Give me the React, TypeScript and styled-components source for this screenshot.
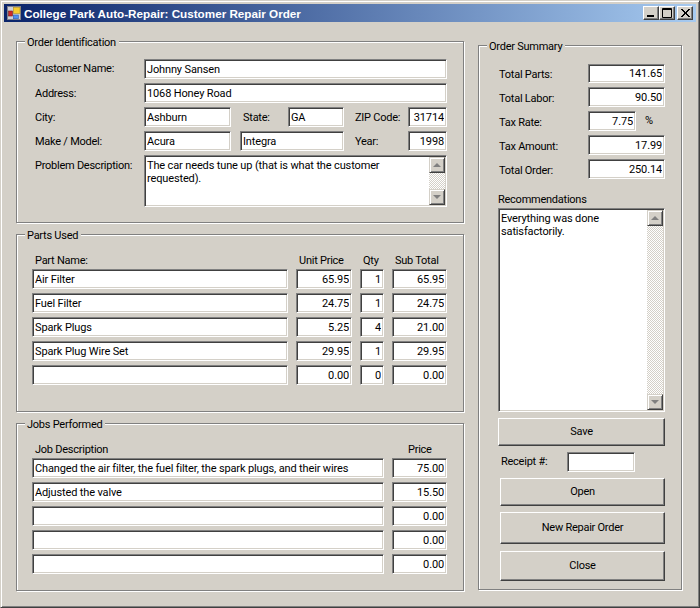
import React, { FC } from 'react';
import styled, { createGlobalStyle } from 'styled-components';

const FACE = '#d4d0c8';
const UI_FONT = '11px Roboto, "Liberation Sans", Arial, sans-serif';

const GlobalStyle = createGlobalStyle`
    html, body {
        margin: 0;
        padding: 0;
        background: ${FACE};
    }
    body {
        font: ${UI_FONT};
        letter-spacing: -0.25px;
        color: #000;
    }
`;

const Window = styled.div`
    box-sizing: border-box;
    width: 700px;
    height: 608px;
    padding: 3px;
    background: ${FACE};
    border: 1px solid;
    border-color: ${FACE} #404040 #404040 ${FACE};
    box-shadow: inset 1px 1px 0 #fff, inset -1px -1px 0 #808080;
    overflow: hidden;
`;

const TitleBar = styled.div`
    display: flex;
    align-items: center;
    height: 18px;
    padding: 0 3px 0 2px;
    background: linear-gradient(90deg, #0a246a, #a6caf0);
`;

const TitleText = styled.span`
    margin-left: 2px;
    margin-right: auto;
    color: #fff;
    font: bold 11.7px "Liberation Sans", Arial, sans-serif;
    letter-spacing: 0;
    white-space: nowrap;
`;

const CaptionButton = styled.button<{ $gap?: number }>`
    display: flex;
    align-items: center;
    justify-content: center;
    box-sizing: border-box;
    width: 16px;
    height: 14px;
    padding: 0;
    margin-left: ${props => props.$gap ?? 0}px;
    background: ${FACE};
    border: 1px solid;
    border-color: #fff #404040 #404040 #fff;
    box-shadow: inset -1px -1px 0 #808080;
`;

const Client = styled.div`
    display: flex;
    align-items: flex-start;
    gap: 14px;
    padding: 19px 0 0 12px;
`;

const LeftColumn = styled.div`
    display: flex;
    flex-direction: column;
    gap: 11px;
    width: 448px;
`;

const RightColumn = styled.div`
    margin-top: 4px;
    width: 204px;
`;

const Group = styled.section<{ $height: number }>`
    box-sizing: border-box;
    height: ${props => props.$height}px;
    border: 1px solid #808080;
    box-shadow: inset 1px 1px 0 #fff, 1px 1px 0 #fff;
`;

const Legend = styled.div`
    width: fit-content;
    height: 12px;
    line-height: 14px;
    margin: -6px 0 0 8px;
    padding: 0 3px 0 2px;
    background: ${FACE};
`;

const Rows = styled.div<{ $top: number; $left: number; $gap?: number }>`
    display: flex;
    flex-direction: column;
    gap: ${props => props.$gap ?? 4}px;
    margin: ${props => props.$top}px 0 0 ${props => props.$left}px;
`;

const FormRow = styled.div<{ $height?: number }>`
    display: flex;
    align-items: center;
    height: ${props => props.$height ?? 20}px;
`;

const TopRow = styled(FormRow)`
    align-items: flex-start;
`;

const Label = styled.label<{ $width: number; $gap?: number; $top?: number; $shift?: number }>`
    flex: none;
    width: ${props => props.$width}px;
    margin-left: ${props => props.$gap ?? 0}px;
    padding-top: ${props => props.$top ?? 0}px;
    margin-top: ${props => Math.max(0, (props.$shift ?? 0) * 2)}px;
    margin-bottom: ${props => Math.max(0, -(props.$shift ?? 0) * 2)}px;
    white-space: nowrap;
`;

const Field = styled.input<{ $width: number; $gap?: number; $right?: boolean }>`
    flex: none;
    box-sizing: border-box;
    width: ${props => props.$width}px;
    height: 100%;
    margin: 0 0 0 ${props => props.$gap ?? 0}px;
    padding: 0 2px;
    font: ${UI_FONT};
    letter-spacing: -0.14px;
    color: #000;
    text-align: ${props => (props.$right ? 'right' : 'left')};
    background: #fff;
    border: 1px solid;
    border-color: #808080 #fff #fff #808080;
    border-radius: 0;
    outline: none;
    box-shadow: inset 1px 1px 0 #404040, inset -1px -1px 0 ${FACE};
`;

const MemoBox = styled.div<{ $width: number; $height: number }>`
    display: flex;
    box-sizing: border-box;
    flex: none;
    width: ${props => props.$width}px;
    height: ${props => props.$height}px;
    padding: 1px;
    background: #fff;
    border: 1px solid;
    border-color: #808080 #fff #fff #808080;
    box-shadow: inset 1px 1px 0 #404040, inset -1px -1px 0 ${FACE};
`;

const MemoText = styled.div`
    flex: 1;
    padding: 2px 6px 0 1px;
    line-height: 13px;
    letter-spacing: -0.14px;
`;

const ScrollBar = styled.div`
    display: flex;
    flex: none;
    flex-direction: column;
    justify-content: space-between;
    width: 16px;
    background: repeating-conic-gradient(${FACE} 0 25%, #fff 0 50%) 0 0 / 2px 2px;
`;

const ScrollButton = styled.div`
    display: flex;
    align-items: center;
    justify-content: center;
    box-sizing: border-box;
    width: 16px;
    height: 16px;
    background: ${FACE};
    border: 1px solid;
    border-color: ${FACE} #404040 #404040 ${FACE};
    box-shadow: inset 1px 1px 0 #fff, inset -1px -1px 0 #808080;
`;

const Arrow = styled.div<{ $down?: boolean }>`
    width: 0;
    height: 0;
    border-left: 4px solid transparent;
    border-right: 4px solid transparent;
    ${props => (props.$down ? 'border-top: 4px solid #808080;' : 'border-bottom: 4px solid #808080;')}
`;

const PartGrid = styled.div`
    display: grid;
    grid-template-columns: 256px 56px 24px 55px;
    column-gap: 8px;
    row-gap: 4px;
    margin: 13px 0 0 15px;
    & > input {
        width: 100%;
        height: 20px;
    }
`;

const JobGrid = styled(PartGrid)`
    grid-template-columns: 352px 55px;
`;

const ColumnHead = styled.div<{ $indent?: number }>`
    height: 14px;
    line-height: 14px;
    padding-left: ${props => props.$indent ?? 3}px;
    margin-bottom: -3px;
    white-space: nowrap;
`;

const SummaryBlock = styled.div`
    margin: 12px 0 0 19px;
`;

const ButtonFace = styled.button<{ $height: number; $left: number; $top: number }>`
    display: block;
    box-sizing: border-box;
    width: ${props => 167 - props.$left}px;
    height: ${props => props.$height}px;
    margin: ${props => props.$top}px 0 0 ${props => props.$left}px;
    padding: 0 0 1px;
    font: ${UI_FONT};
    letter-spacing: -0.25px;
    color: #000;
    background: ${FACE};
    border: 1px solid;
    border-color: #fff #404040 #404040 #fff;
    border-radius: 0;
    box-shadow: inset -1px -1px 0 #808080;
`;

const ActionArea = styled.div`
    margin-left: 19px;
`;

const ReceiptRow = styled(FormRow)`
    margin: 6px 0 0 3px;
`;

const Percent = styled.span`
    margin-left: 9px;
    margin-bottom: 1px;
`;

const AppIcon: FC = () => (
    <svg width="16" height="16" viewBox="0 0 16 16">
        <rect x="1.5" y="1.5" width="13" height="13" fill="#cfd0d8" stroke="#80808a" />
        <rect x="2.5" y="6" width="4" height="5" fill="#d02828" stroke="#702020" strokeWidth="0.6" />
        <rect x="7.3" y="2.4" width="6.7" height="6" fill="#f8cc30" stroke="#b09020" strokeWidth="0.6" />
        <rect x="7.3" y="10" width="5" height="3.7" fill="#4f90f0" stroke="#3060b0" strokeWidth="0.6" />
    </svg>
);

const MinGlyph: FC = () => (
    <svg width="14" height="12" viewBox="0 0 14 12">
        <rect x="3" y="8" width="7" height="2" fill="#000" />
    </svg>
);

const MaxGlyph: FC = () => (
    <svg width="14" height="12" viewBox="0 0 14 12">
        <path d="M2.5 1.5h9v9h-9z M2 2.5h10" fill="none" stroke="#000" />
    </svg>
);

const CloseGlyph: FC = () => (
    <svg width="14" height="12" viewBox="0 0 14 12">
        <path d="M3 2l8 8M4 2l8 8M11 2l-8 8M12 2l-8 8" fill="none" stroke="#000" strokeWidth="1" />
    </svg>
);

const Memo: FC<{ width: number; height: number; text: string }> = ({ width, height, text }) => (
    <MemoBox $width={width} $height={height}>
        <MemoText>{text}</MemoText>
        <ScrollBar>
            <ScrollButton><Arrow /></ScrollButton>
            <ScrollButton><Arrow $down /></ScrollButton>
        </ScrollBar>
    </MemoBox>
);

const parts = [
    ['Air Filter', '65.95', '1', '65.95'],
    ['Fuel Filter', '24.75', '1', '24.75'],
    ['Spark Plugs', '5.25', '4', '21.00'],
    ['Spark Plug Wire Set', '29.95', '1', '29.95'],
    ['', '0.00', '0', '0.00'],
];

const jobs = [
    ['Changed the air filter, the fuel filter, the spark plugs, and their wires', '75.00'],
    ['Adjusted the valve', '15.50'],
    ['', '0.00'],
    ['', '0.00'],
    ['', '0.00'],
];

const summary = [
    { label: 'Total Parts:', value: '141.65', height: 19 },
    { label: 'Total Labor:', value: '90.50', height: 20 },
    { label: 'Tax Rate:', value: '7.75', height: 20, width: 48 },
    { label: 'Tax Amount:', value: '17.99', height: 20 },
    { label: 'Total Order:', value: '250.14', height: 20 },
];

const App: FC = () => (
    <Window>
        <GlobalStyle />
        <TitleBar>
            <AppIcon />
            <TitleText>College Park Auto-Repair: Customer Repair Order</TitleText>
            <CaptionButton><MinGlyph /></CaptionButton>
            <CaptionButton><MaxGlyph /></CaptionButton>
            <CaptionButton $gap={2}><CloseGlyph /></CaptionButton>
        </TitleBar>
        <Client>
            <LeftColumn>
                <Group $height={182}>
                    <Legend>Order Identification</Legend>
                    <Rows $top={11} $left={18}>
                        <FormRow>
                            <Label $width={109} $shift={-1}>Customer Name:</Label>
                            <Field $width={303} readOnly value="Johnny Sansen" />
                        </FormRow>
                        <FormRow>
                            <Label $width={109}>Address:</Label>
                            <Field $width={303} readOnly value="1068 Honey Road" />
                        </FormRow>
                        <FormRow>
                            <Label $width={109}>City:</Label>
                            <Field $width={87} readOnly value="Ashburn" />
                            <Label $width={45} $gap={12}>State:</Label>
                            <Field $width={56} readOnly value="GA" />
                            <Label $width={53} $gap={11}>ZIP Code:</Label>
                            <Field $width={39} $right readOnly value="31714" />
                        </FormRow>
                        <FormRow>
                            <Label $width={109}>Make / Model:</Label>
                            <Field $width={87} readOnly value="Acura" />
                            <Field $width={104} $gap={9} readOnly value="Integra" />
                            <Label $width={53} $gap={11}>Year:</Label>
                            <Field $width={39} $right readOnly value="1998" />
                        </FormRow>
                        <TopRow $height={52}>
                            <Label $width={109} $top={4}>Problem Description:</Label>
                            <Memo width={303} height={52} text="The car needs tune up (that is what the customer requested)." />
                        </TopRow>
                    </Rows>
                </Group>
                <Group $height={178}>
                    <Legend>Parts Used</Legend>
                    <PartGrid>
                        <ColumnHead>Part Name:</ColumnHead>
                        <ColumnHead>Unit Price</ColumnHead>
                        <ColumnHead>Qty</ColumnHead>
                        <ColumnHead>Sub Total</ColumnHead>
                        {parts.map((part, index) => (
                            <React.Fragment key={index}>
                                <Field $width={256} readOnly value={part[0]} />
                                <Field $width={56} $right readOnly value={part[1]} />
                                <Field $width={24} $right readOnly value={part[2]} />
                                <Field $width={55} $right readOnly value={part[3]} />
                            </React.Fragment>
                        ))}
                    </PartGrid>
                </Group>
                <Group $height={168}>
                    <Legend>Jobs Performed</Legend>
                    <JobGrid>
                        <ColumnHead>Job Description</ColumnHead>
                        <ColumnHead $indent={16}>Price</ColumnHead>
                        {jobs.map((job, index) => (
                            <React.Fragment key={index}>
                                <Field $width={352} readOnly value={job[0]} />
                                <Field $width={55} $right readOnly value={job[1]} />
                            </React.Fragment>
                        ))}
                    </JobGrid>
                </Group>
            </LeftColumn>
            <RightColumn>
                <Group $height={545}>
                    <Legend>Order Summary</Legend>
                    <SummaryBlock>
                        <Rows $top={0} $left={1}>
                            {summary.map(row => (
                                <FormRow key={row.label} $height={row.height}>
                                    <Label $width={89} $shift={1}>{row.label}</Label>
                                    <Field $width={row.width ?? 77} $right readOnly value={row.value} />
                                    {row.width && <Percent>%</Percent>}
                                </FormRow>
                            ))}
                        </Rows>
                        <Rows $top={14} $left={0} $gap={2}>
                            <Label $width={100}>Recommendations</Label>
                            <Memo width={167} height={204} text="Everything was done satisfactorily." />
                        </Rows>
                    </SummaryBlock>
                    <ActionArea>
                        <ButtonFace $height={28} $left={0} $top={6}>Save</ButtonFace>
                        <ReceiptRow>
                            <Label $width={66} $shift={-1}>Receipt #:</Label>
                            <Field $width={68} readOnly value="" />
                        </ReceiptRow>
                        <ButtonFace $height={28} $left={2} $top={6}>Open</ButtonFace>
                        <ButtonFace $height={32} $left={2} $top={6}>New Repair Order</ButtonFace>
                        <ButtonFace $height={30} $left={2} $top={7}>Close</ButtonFace>
                    </ActionArea>
                </Group>
            </RightColumn>
        </Client>
    </Window>
);

export default App;
